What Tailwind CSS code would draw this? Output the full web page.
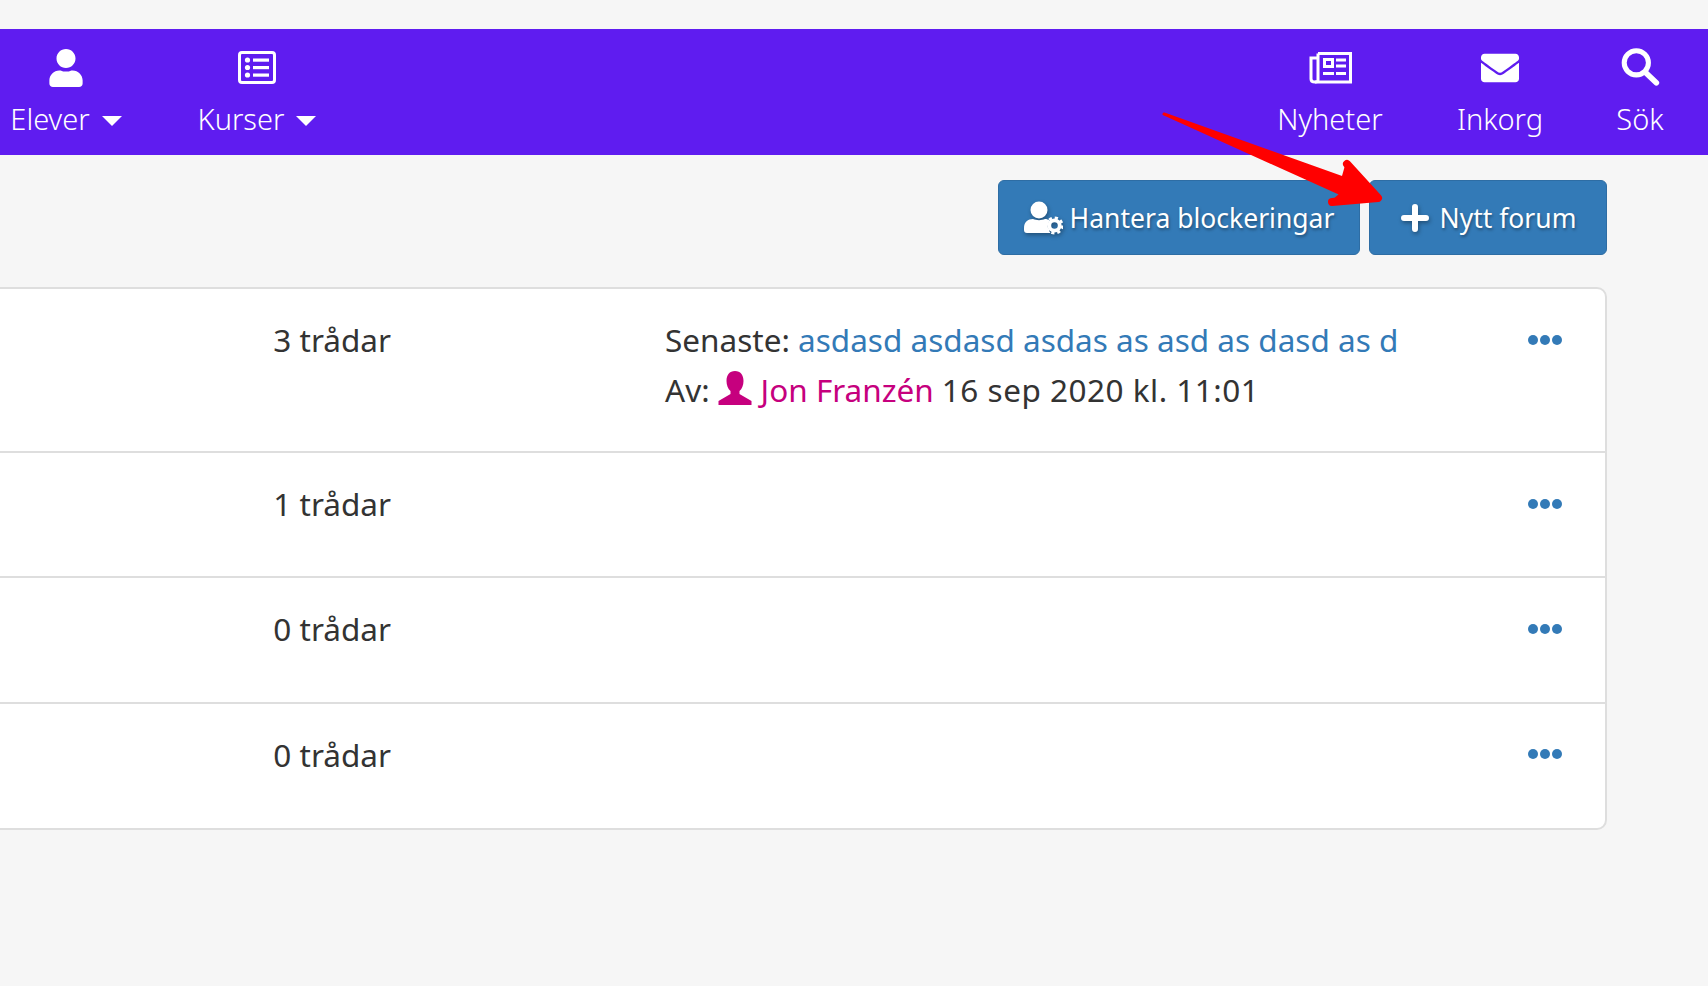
<!DOCTYPE html>
<html><head><meta charset="utf-8"><script src="https://cdn.jsdelivr.net/npm/@tailwindcss/browser@4"></script></head>
<body class="relative w-[1708px] h-[986px] overflow-hidden bg-[#f6f6f6] font-['Noto_Sans',sans-serif] text-[#333] text-[31.5px] leading-[50px]">
<nav class="mt-[29px] h-[126px] bg-[#5f1cf0] text-white flex justify-between text-[29px] font-light leading-[40px]">
  <div class="flex">
    <a class="w-[132px] flex flex-col items-center pt-[20px]">
      <svg class="w-[34px] h-[38px] fill-white" viewBox="0 0 448 512"><path d="M224 256c70.7 0 128-57.3 128-128S294.7 0 224 0 96 57.3 96 128s57.3 128 128 128zm89.6 32h-16.7c-22.2 10.2-46.900 16-72.900 16s-50.600-5.800-72.900-16h-16.700C60.200 288 0 348.200 0 422.400V464c0 26.500 21.500 48 48 48h352c26.500 0 48-21.500 48-48v-41.600c0-74.200-60.200-134.400-134.400-134.400z"/></svg>
      <span class="mt-[12px] flex items-center gap-[12px]">Elever<i class="block w-0 h-0 border-x-[10px] border-x-transparent border-t-[10px] border-t-white mt-[4px]"></i></span>
    </a>
    <a class="ml-[58px] w-[134px] flex flex-col items-center pt-[20px]">
      <svg class="w-[38px] h-[38px]" viewBox="0 0 38 38"><rect x="1.5" y="3.5" width="35" height="30" rx="2.5" fill="none" stroke="#fff" stroke-width="3"/><g fill="#fff"><circle cx="9.5" cy="11" r="2.6"/><circle cx="9.5" cy="18.5" r="2.6"/><circle cx="9.5" cy="26" r="2.6"/><rect x="15" y="9.5" width="16" height="3.2"/><rect x="15" y="17" width="16" height="3.2"/><rect x="15" y="24.500" width="16" height="3.2"/></g></svg>
      <span class="mt-[12px] flex items-center gap-[12px]">Kurser<i class="block w-0 h-0 border-x-[10px] border-x-transparent border-t-[10px] border-t-white mt-[4px]"></i></span>
    </a>
  </div>
  <div class="flex pr-[28px] gap-[40px]">
    <a class="w-[140px] flex flex-col items-center pt-[20px]">
      <svg class="w-[43px] h-[38px]" viewBox="0 0 43 38"><path d="M9 4.500h32.500v28.500H6" fill="none" stroke="#fff" stroke-width="3"/><path d="M9 4.500V31c0 1-1 2-3 2s-4-1-4-3V9h7" fill="none" stroke="#fff" stroke-width="3"/><g fill="#fff"><path d="M14 9h11v10H14zm3 3v4h5v-4z" fill-rule="evenodd"/><rect x="27" y="9.500" width="10" height="3"/><rect x="27" y="15.500" width="10" height="3"/><rect x="14" y="23" width="11" height="3"/><rect x="27" y="23" width="10" height="3"/></g></svg>
      <span class="mt-[12px]">Nyheter</span>
    </a>
    <a class="w-[120px] flex flex-col items-center pt-[20px]">
      <svg class="w-[38px] h-[38px] fill-white" viewBox="0 0 512 512"><path d="M502.3 190.8c3.900-3.100 9.700-.2 9.700 4.700V400c0 26.500-21.500 48-48 48H48c-26.500 0-48-21.500-48-48V195.600c0-5 5.700-7.800 9.700-4.700 22.400 17.400 52.100 39.500 154.100 113.600 21.100 15.400 56.700 47.800 92.200 47.600 35.700.3 72-32.800 92.300-47.600 102-74.100 131.600-96.300 154-113.700zM256 320c23.200.4 56.600-29.200 73.400-41.400 132.700-96.300 142.800-104.700 173.400-128.700 5.800-4.500 9.200-11.500 9.200-18.900v-19c0-26.500-21.500-48-48-48H48C21.500 64 0 85.500 0 112v19c0 7.400 3.400 14.300 9.200 18.900 30.600 23.900 40.700 32.400 173.400 128.700 16.800 12.200 50.200 41.800 73.400 41.400z"/></svg>
      <span class="mt-[12px]">Inkorg</span>
    </a>
    <a class="w-[80px] flex flex-col items-center pt-[18px]">
      <svg class="w-[40px] h-[40px]" viewBox="0 0 38 38"><circle cx="15.500" cy="15" r="11.500" fill="none" stroke="#fff" stroke-width="4.800"/><path d="M24.500 24.500L34.500 34" stroke="#fff" stroke-width="5.400" stroke-linecap="round"/></svg>
      <span class="mt-[12px]">Sök</span>
    </a>
  </div>
</nav>
<div class="mt-[25px] pr-[101px] flex justify-end gap-[9px] text-white font-normal leading-[40px]">
  <button class="h-[75px] w-[362px] flex items-center justify-center gap-[7px] rounded-[6px] bg-[#337ab7] border border-[#2e6da4] text-[26.5px] [text-shadow:1px_2px_3px_rgba(0,0,0,0.35)]">
    <svg class="w-[39px] h-[34px] drop-shadow-[1px_2px_2px_rgba(0,0,0,0.35)]" viewBox="0 0 39 34"><circle cx="15" cy="9" r="8.500" fill="#fff"/><path d="M3 32q-3 0-3-3v-2c0-6 4-9 9-9 3 1.500 9 1.500 12 0 2 0 3 .5 4.500 1.500a10 10 0 0 0 1 12.500z" fill="#fff"/><circle cx="30.500" cy="24.500" r="5.200" fill="none" stroke="#fff" stroke-width="3.800"/><circle cx="30.500" cy="24.500" r="7.800" fill="none" stroke="#fff" stroke-width="2.600" stroke-dasharray="3.200 2.930"/></svg>
    Hantera blockeringar
  </button>
  <button class="h-[75px] w-[238px] flex items-center justify-center gap-[10px] rounded-[6px] bg-[#337ab7] border border-[#2e6da4] text-[26.5px] [text-shadow:1px_2px_3px_rgba(0,0,0,0.35)]">
    <svg class="w-[30px] h-[30px] drop-shadow-[1px_2px_2px_rgba(0,0,0,0.35)]" viewBox="0 0 30 30"><path d="M15 4v22M4 15h22" stroke="#fff" stroke-width="6" stroke-linecap="round"/></svg>
    Nytt forum
  </button>
</div>
<section class="mt-[32px] w-[1617px] -ml-[10px] bg-white border-2 border-[#dedede] rounded-[10px]">
  <div class="flex border-b-2 border-[#dedede] pt-[26px] pb-[36px]">
    <div class="w-[399px] text-right">3 trådar</div>
    <div class="ml-[274px] w-[863px] shrink-0">
      <div class="whitespace-nowrap">Senaste: <a class="text-[#337ab7]">asdasd asdasd asdas as asd as dasd as d</a></div>
      <div class="flex items-center whitespace-nowrap">Av:<svg class="w-[34px] h-[34px] ml-[8px] mr-[9px] -mt-[4px]" viewBox="0 0 34 34"><path fill="#c6007e" d="M17 0c5.500 0 8.500 4 8.500 10 0 4-1.500 8-4 10v3l12 7v4H.5v-4l12-7v-3c-2.500-2-4-6-4-10C8.500 4 11.500 0 17 0z"/></svg><a class="text-[#c6007e]">Jon Franzén</a><span class="ml-[8px] tracking-[0.5px]">16 sep 2020 kl. 11:01</span></div>
    </div>
    <div class="w-[36px] flex gap-[2px] h-[10px] mt-[20px]"><i class="size-[10px] rounded-full bg-[#337ab7]"></i><i class="size-[10px] rounded-full bg-[#337ab7]"></i><i class="size-[10px] rounded-full bg-[#337ab7]"></i></div>
  </div>
  <div class="flex border-b-2 border-[#dedede] pt-[26px] pb-[47px]">
    <div class="w-[399px] text-right">1 trådar</div><div class="ml-[274px] w-[863px] shrink-0"></div>
    <div class="w-[36px] flex gap-[2px] h-[10px] mt-[20px]"><i class="size-[10px] rounded-full bg-[#337ab7]"></i><i class="size-[10px] rounded-full bg-[#337ab7]"></i><i class="size-[10px] rounded-full bg-[#337ab7]"></i></div>
  </div>
  <div class="flex border-b-2 border-[#dedede] pt-[26px] pb-[48px]">
    <div class="w-[399px] text-right">0 trådar</div><div class="ml-[274px] w-[863px] shrink-0"></div>
    <div class="w-[36px] flex gap-[2px] h-[10px] mt-[20px]"><i class="size-[10px] rounded-full bg-[#337ab7]"></i><i class="size-[10px] rounded-full bg-[#337ab7]"></i><i class="size-[10px] rounded-full bg-[#337ab7]"></i></div>
  </div>
  <div class="flex pt-[26px] pb-[48px]">
    <div class="w-[399px] text-right">0 trådar</div><div class="ml-[274px] w-[863px] shrink-0"></div>
    <div class="w-[36px] flex gap-[2px] h-[10px] mt-[19px]"><i class="size-[10px] rounded-full bg-[#337ab7]"></i><i class="size-[10px] rounded-full bg-[#337ab7]"></i><i class="size-[10px] rounded-full bg-[#337ab7]"></i></div>
  </div>
</section>
<svg class="absolute left-0 top-0 pointer-events-none" width="1708" height="986" viewBox="0 0 1708 986"><path d="M1164 114L1343 178L1347 164L1378 198L1332 202L1341 194Z" fill="#ff0000" stroke="#ff0000" stroke-width="3" stroke-linejoin="round"/><path d="M1347 164L1378 198L1332 202" fill="none" stroke="#ff0000" stroke-width="8" stroke-linecap="round" stroke-linejoin="round"/></svg>
</body></html>
